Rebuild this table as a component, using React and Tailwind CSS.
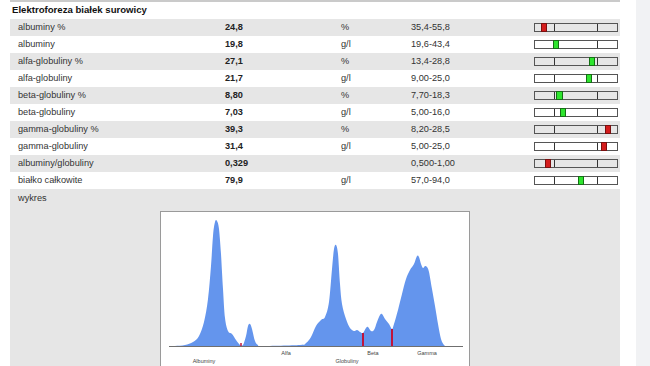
import React from "react";

const rows = [
  { name: "albuminy %", value: "24,8", unit: "%", range: "35,4-55,8", pos: 6, bad: true },
  { name: "albuminy", value: "19,8", unit: "g/l", range: "19,6-43,4", pos: 18 },
  { name: "alfa-globuliny %", value: "27,1", unit: "%", range: "13,4-28,8", pos: 54 },
  { name: "alfa-globuliny", value: "21,7", unit: "g/l", range: "9,00-25,0", pos: 51 },
  { name: "beta-globuliny %", value: "8,80", unit: "%", range: "7,70-18,3", pos: 21, wide: true },
  { name: "beta-globuliny", value: "7,03", unit: "g/l", range: "5,00-16,0", pos: 25 },
  { name: "gamma-globuliny %", value: "39,3", unit: "%", range: "8,20-28,5", pos: 70, bad: true },
  { name: "gamma-globuliny", value: "31,4", unit: "g/l", range: "5,00-25,0", pos: 66, bad: true },
  { name: "albuminy/globuliny", value: "0,329", unit: "", range: "0,500-1,00", pos: 10, bad: true },
  { name: "białko całkowite", value: "79,9", unit: "g/l", range: "57,0-94,0", pos: 43 }
];

const pts = [
  [169, 342], [175, 342], [185, 341], [193, 338], [199, 332], [204, 318], [208, 295], [211, 262],
  [213, 232], [215, 218], [217, 217], [219, 225], [221, 250], [223, 285], [225, 314], [228, 327],
  [232, 330], [236, 336], [240, 341], [243, 341], [246, 332], [248, 322], [250, 320], [252, 325],
  [255, 337], [258, 341], [262, 342], [300, 341], [306, 339], [311, 333], [316, 322], [321, 316],
  [325, 313], [329, 298], [332, 265], [334, 245], [336, 241], [338, 250], [340, 280], [342, 300],
  [346, 315], [350, 324], [354, 327], [357, 326], [360, 328], [363, 329], [366, 324], [368, 323],
  [371, 327], [374, 326], [377, 318], [380, 311], [382, 310], [385, 315], [389, 320], [392, 325],
  [394, 320], [398, 306], [402, 290], [406, 275], [410, 266], [414, 260], [417, 252], [419, 253],
  [421, 260], [423, 264], [425, 262], [427, 263], [429, 268], [432, 285], [435, 302], [438, 320],
  [441, 335], [444, 341], [447, 342], [463, 342]
];

function smoothPath(p) {
  let d = `M${p[0][0]},${p[0][1]}`;
  for (let i = 0; i < p.length - 1; i++) {
    const p0 = p[i - 1] || p[i];
    const p1 = p[i];
    const p2 = p[i + 1];
    const p3 = p[i + 2] || p2;
    const c1x = p1[0] + (p2[0] - p0[0]) / 6;
    const c1y = Math.min(342, p1[1] + (p2[1] - p0[1]) / 6);
    const c2x = p2[0] - (p3[0] - p1[0]) / 6;
    const c2y = Math.min(342, p2[1] - (p3[1] - p1[1]) / 6);
    d += ` C${c1x},${c1y} ${c2x},${c2y} ${p2[0]},${p2[1]}`;
  }
  return d + " Z";
}

function RangeBar({ pos, bad, wide }) {
  return (
    <div className="relative h-[9px] w-[84px] border border-[#555]">
      <div className="absolute left-[19px] top-0 h-full w-px bg-[#333]" />
      <div className="absolute left-[62px] top-0 h-full w-px bg-[#333]" />
      <div
        className={
          bad
            ? "absolute -top-px h-[9px] border border-[#7a1010] bg-[#d41c1c]"
            : "absolute -top-px h-[9px] border border-[#157015] bg-[#2ee52e]"
        }
        style={{ left: pos, width: wide ? 7 : 6 }}
      />
    </div>
  );
}

export default function App() {
  return (
    <div className="flex h-[366px] w-[650px] overflow-hidden bg-white text-[#333]" style={{ fontFamily: '"Liberation Sans", Arial, sans-serif' }}>
      <div className="w-[636px] shrink-0">
        <div className="ml-[10px] w-[610px]">
          <div className="h-[2px] bg-[#cacaca]" />
          <div className="flex h-[17px] items-center pl-[2px] text-[9.6px] font-bold text-[#111]">Elektroforeza białek surowicy</div>
          {rows.map((r, i) => (
            <div
              key={r.name}
              className={`grid h-[17px] grid-cols-[207px_116px_70px_123px_84px] items-center pl-[8px] text-[9.2px] ${i % 2 === 0 ? "bg-[#e6e6e6]" : "bg-white"}`}
            >
              <div>{r.name}</div>
              <div className="font-bold text-[#222]">{r.value}</div>
              <div>{r.unit}</div>
              <div>{r.range}</div>
              <RangeBar pos={r.pos} bad={r.bad} wide={r.wide} />
            </div>
          ))}
          <div className="h-[177px] bg-[#e6e6e6] pl-[8px] pt-[3px] text-[9.2px]">
            <div>wykres</div>
            <div className="ml-[142px] mt-[5px] h-[157px] w-[310px] border border-[#9a9a9a] bg-white">
              <svg width="308" height="155" viewBox="161 208 308 155">
                <path d={smoothPath(pts)} fill="#6495ed" />
                <line x1="169" y1="342.5" x2="463" y2="342.5" stroke="#4a4a4a" strokeWidth="0.8" />
                <line x1="241" y1="339" x2="241" y2="342" stroke="#c0143c" strokeWidth="1.5" />
                <line x1="363" y1="329" x2="363" y2="342" stroke="#c0143c" strokeWidth="2" />
                <line x1="392" y1="325" x2="392" y2="342" stroke="#c0143c" strokeWidth="2" />
                <g fontSize="5.5" fill="#444" textAnchor="middle" fontFamily="Liberation Sans, Arial, sans-serif">
                  <text x="286" y="351">Alfa</text>
                  <text x="373" y="351">Beta</text>
                  <text x="427" y="351">Gamma</text>
                  <text x="204" y="359">Albuminy</text>
                  <text x="347" y="359">Globuliny</text>
                </g>
              </svg>
            </div>
          </div>
        </div>
      </div>
      <div className="w-[14px] bg-[#f1f2f4]" />
    </div>
  );
}
